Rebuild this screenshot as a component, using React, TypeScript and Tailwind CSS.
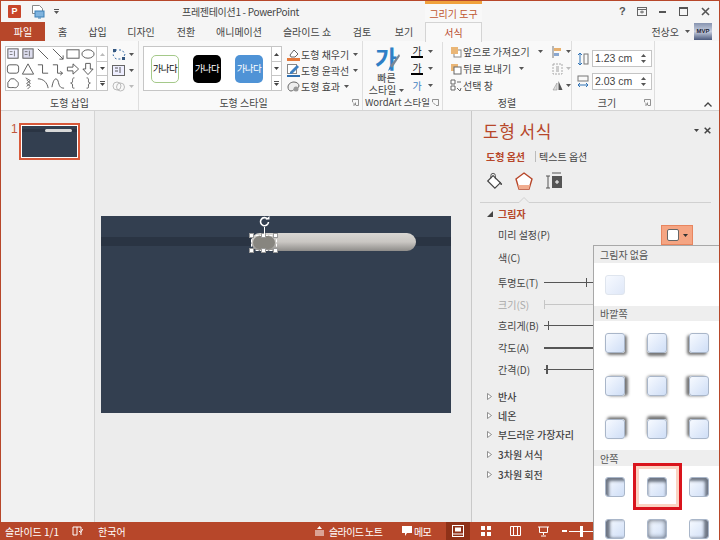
import React from "react";

const Caret = ({ c = "#555", cls = "" }: { c?: string; cls?: string }) => (
  <svg width="5" height="3" viewBox="0 0 5 3" className={cls}><path d="M0 0h5L2.5 3z" fill={c} /></svg>
);

const tabs: [string, string][] = [
  ["홈", "w-[35px]"], ["삽입", "w-[35px]"], ["디자인", "w-[52px]"], ["전환", "w-[38px]"],
  ["애니메이션", "w-[68px]"], ["슬라이드 쇼", "w-[68px]"], ["검토", "w-[42px]"], ["보기", "w-[42px]"],
];

const S = "#555";
const shapeIcons: React.ReactNode[] = [
  <><rect x="2" y="2" width="11" height="10" fill="#eef" stroke={S} /><path d="M4 5h3M4 8h3M9 4v6" stroke={S} strokeWidth=".8" /></>,
  <><rect x="2" y="2" width="11" height="10" fill="#dde" stroke={S} /><path d="M4 5h3M4 8h3M9 4v6" stroke={S} strokeWidth=".8" /></>,
  <path d="M2 2l11 11" stroke={S} fill="none" />,
  <path d="M2 2l11 11M13 13V9M13 13H9" stroke={S} fill="none" />,
  <rect x="1" y="3" width="13" height="9" fill="none" stroke={S} />,
  <ellipse cx="7.5" cy="7.5" rx="6.5" ry="4.5" fill="none" stroke={S} />,
  <rect x="1.5" y="3" width="12" height="9" rx="2.5" fill="none" stroke={S} />,
  <path d="M7.5 2L13.5 13H1.5z" fill="none" stroke={S} />,
  <path d="M2 3h5v9h6" fill="none" stroke={S} />,
  <path d="M2 3h5v9h5M10 10l2.5 2-2.5 2" fill="none" stroke={S} />,
  <path d="M1.5 5.5h6V2l6 5.5-6 5.5V9.5h-6z" fill="none" stroke={S} />,
  <path d="M5 1.5v6H2l5.5 6 5.5-6h-3v-6z" fill="none" stroke={S} />,
  <path d="M2 12V7l3-4h4l4 4c1 3-1 6-4 5.5-2-.5-3 .5-7-.5z" fill="none" stroke={S} />,
  <path d="M5 2l5 3-4 3 4 3-3 3M6 4l4 4-4 3" fill="none" stroke={S} strokeWidth=".9" />,
  <path d="M2 3c6 0 10 4 11 10" fill="none" stroke={S} />,
  <path d="M1 12c2-12 6-10 7-5s3 6 6 6" fill="none" stroke={S} />,
  <path d="M9 2C7 2 7 3 7 5S7 7 5 7.5C7 8 7 9 7 11s0 2 2 2" fill="none" stroke={S} />,
  <path d="M6 2c2 0 2 1 2 3s0 2 2 2.5C8 8 8 9 8 11s0 2-2 2" fill="none" stroke={S} />,
];

const Scroll = ({ h = "h-[15px]", up = false, more = false, dim = false }: { h?: string; up?: boolean; more?: boolean; dim?: boolean }) => (
  <div className={`${h} flex flex-col items-center justify-center border-b border-[#c6c6c6] last:border-b-0`}>
    {more && <div className="w-[5px] h-px bg-[#555] mb-px" />}
    <svg width="5" height="3" viewBox="0 0 5 3" className={up ? "rotate-180" : ""}><path d="M0 0h5L2.5 3z" fill={dim ? "#bbb" : "#444"} /></svg>
  </div>
);

const GroupLabel = ({ text, launcher = false, cls = "" }: { text: string; launcher?: boolean; cls?: string }) => (
  <div className={`h-[16px] flex items-center justify-center relative text-[10px] text-[#444] ${cls}`}>
    {text}
    {launcher && (
      <svg width="7" height="7" viewBox="0 0 7 7" className="absolute right-[3px] top-[5px]"><path d="M.5 3V.5H6.5V6.5H4M1 3.5l2.5 2.5M3.5 3.5V6H1" fill="none" stroke="#777" strokeWidth=".8" /></svg>
    )}
  </div>
);

const MenuRow = ({ icon, text, caret = true, gap = "ml-[7px]" }: { icon: React.ReactNode; text: string; caret?: boolean; gap?: string }) => (
  <div className="h-[17.5px] flex items-center text-[10px] text-[#444]">
    <div className="w-[13px] flex justify-center">{icon}</div>
    <span className="ml-[1px] whitespace-nowrap">{text}</span>
    {caret && <Caret cls={gap} />}
  </div>
);

const Chip = ({ cls, text }: { cls: string; text: string }) => (
  <div className={`w-[28px] h-[28px] rounded-[5px] flex items-center justify-center text-[9.5px] tracking-[-0.5px] whitespace-nowrap ${cls}`}>{text}</div>
);

const Spin = ({ v }: { v: string }) => (
  <div className="w-[60px] h-[17px] bg-white border border-[#c4c4c4] flex items-center justify-between pl-[2px] pr-[5px] text-[10.5px] text-[#444] font-['Liberation_Sans',sans-serif]">
    {v}
    <div className="flex flex-col gap-[3px]">
      <Caret cls="rotate-180" />
      <Caret />
    </div>
  </div>
);

const Slider = ({ tick, light = false, thick = false, dual = false }: { tick?: number; light?: boolean; thick?: boolean; dual?: boolean }) => {
  const line = light ? "bg-[#c6c6c6]" : "bg-[#555]";
  const ticks: Record<number, string> = { 0: "left-0", 2: "left-[2px]", 4: "left-[4px]", 42: "left-[42px]" };
  return (
    <div className="relative w-[50px] h-[9px]">
      <div className={`absolute left-0 right-0 top-[4px] ${thick ? "h-[2px]" : "h-px"} ${line}`} />
      {tick !== undefined && <div className={`absolute top-0 w-px h-[9px] ${line} ${ticks[tick]}`} />}
      {dual && <div className={`absolute top-0 left-[3px] w-px h-[9px] ${line}`} />}
    </div>
  );
};

const PaneRow = ({ label, h, dim = false, children }: { label: string; h: string; dim?: boolean; children?: React.ReactNode }) => (
  <div className={`${h} flex items-center pl-[26px] text-[10px] ${dim ? "text-[#aaa]" : "text-[#444]"}`}>
    <div className="w-[46px] whitespace-nowrap">{label}</div>
    {children}
  </div>
);

const Collapsed = ({ label, h }: { label: string; h: string }) => (
  <div className={`${h} flex items-center text-[10px] font-medium text-[#444]`}>
    <svg width="5" height="7" viewBox="0 0 5 7" className="ml-[15px] mr-[6px]"><path d="M.5.5L4.5 3.5.5 6.5z" fill="#fff" stroke="#777" strokeWidth=".8" /></svg>
    {label}
  </div>
);

const swatch = "w-[20px] h-[20px] rounded-[3px] bg-gradient-to-br from-[#f7faff] to-[#cfdef6] border border-[#a9b6c9]";
const outer = [
  "shadow-[2px_2px_3px_#777]", "shadow-[0_3px_3px_#777]", "shadow-[-2px_2px_3px_#777]",
  "shadow-[3px_0_3px_#777]", "shadow-[0_0_3px_#777]", "shadow-[-3px_0_3px_#777]",
  "shadow-[2px_-2px_3px_#777]", "shadow-[0_-3px_3px_#777]", "shadow-[-2px_-2px_3px_#777]",
];
const inner = [
  "shadow-[inset_3px_3px_3px_#6f7785]", "shadow-[inset_0_4px_3px_#6f7785]", "shadow-[inset_-3px_3px_3px_#6f7785]",
  "shadow-[inset_4px_0_3px_#6f7785]", "shadow-[inset_0_0_5px_#555d6b]", "shadow-[inset_-4px_0_3px_#6f7785]",
];

const MenuHead = ({ text, h }: { text: string; h: string }) => (
  <div className={`${h} bg-[#eeeeee] flex items-center pl-[6px] text-[10px] text-[#555]`}>{text}</div>
);

export default function App() {
  return (
    <div className="w-[720px] h-[540px] overflow-hidden flex flex-col bg-[#f5f5f5] font-['Noto_Sans_CJK_KR','Noto_Sans',sans-serif] border-x border-t border-[#b7472a] relative">
      {/* title bar */}
      <div className="h-[21px] flex items-center text-[#444] shrink-0">
        <div className="w-[424px] flex items-center pl-[7px]">
          <div className="w-[13px] h-[13px] bg-[#c8452a] text-white text-[9px] font-bold flex items-center justify-center font-['Liberation_Sans',sans-serif] rounded-[1px]">P</div>
          <svg width="14" height="15" viewBox="0 0 14 15" className="ml-[10px]">
            <path d="M1.5 1.5h7l3 3v5h-10z" fill="#fff" stroke="#888" />
            <rect x="4" y="7" width="9" height="6" fill="#7fb3de" stroke="#3b7fb5" />
            <path d="M7 14h3" stroke="#3b7fb5" />
          </svg>
          <div className="ml-[9px] flex flex-col items-center gap-px"><div className="w-[5px] h-px bg-[#555]" /><Caret /></div>
          <div className="ml-[123px] text-[10px] tracking-[-0.3px] whitespace-nowrap">프레젠테이션1 - PowerPoint</div>
        </div>
        <div className="w-[57px] h-full flex flex-col">
          <div className="h-[3px] bg-[#f0a13c]" />
          <div className="flex-1 flex items-center justify-center text-[10px] text-[#c0562f] bg-[#f8f8f8] whitespace-nowrap">그리기 도구</div>
        </div>
        <div className="flex-1 relative h-full flex items-center text-[#555]">
          <span className="ml-[137px] text-[11px] font-bold font-['Liberation_Sans',sans-serif]">?</span>
          <svg width="10" height="9" viewBox="0 0 10 9" className="ml-[11px]"><rect x=".5" y=".5" width="9" height="8" fill="none" stroke="#666" /><path d="M.5 2.5h9M3 5h4M5 3.5v3" stroke="#666" /></svg>
          <div className="ml-[12px] w-[7px] h-[2px] bg-[#555]" />
          <div className="ml-[13px] w-[9px] h-[9px] border border-[#555] border-t-2" />
          <svg width="9" height="9" viewBox="0 0 9 9" className="ml-[13px]"><path d="M1 1l7 7M8 1L1 8" stroke="#555" strokeWidth="1.6" /></svg>
        </div>
      </div>

      {/* tabs */}
      <div className="h-[19px] flex items-stretch shrink-0 text-[10px] text-[#444] relative z-10">
        <div className="w-[44px] bg-[#b7472a] text-white flex items-center justify-center">파일</div>
        {tabs.map(([t, w]) => (
          <div key={t} className={`${w} flex items-center justify-center whitespace-nowrap`}>{t}</div>
        ))}
        <div className="w-[57px] h-[20px] bg-[#f9f9f9] border-x border-t border-[#d4d4d4] text-[#b7472a] flex items-center justify-center">서식</div>
        <div className="flex-1 flex items-center justify-end pr-[7px]">
          <span className="text-[10px] mr-[6px]">전상오</span>
          <Caret cls="mr-[4px]" />
          <div className="w-[18px] h-[17px] bg-gradient-to-b from-[#8794b0] via-[#c8d0e0] to-[#4d5b7e] text-[#223] text-[6px] font-bold flex items-center justify-center font-['Liberation_Sans',sans-serif]">MVP</div>
        </div>
      </div>

      {/* ribbon */}
      <div className="h-[70px] flex bg-[#f9f9f9] border-b border-[#d4d4d4] shrink-0">
        {/* shapes */}
        <div className="w-[138px] flex flex-col border-r border-[#dedede]">
          <div className="h-[53px] flex pl-[4px] pt-[5px]">
            <div className="w-[103px] h-[45px] flex bg-white border border-[#c6c6c6]">
              <div className="w-[91px] grid grid-cols-6 content-start -ml-[1px]">
                {shapeIcons.map((ic, i) => (
                  <div key={i} className="h-[14.5px] flex items-center justify-center">
                    <svg width="14" height="14" viewBox="0 0 15 15">{ic}</svg>
                  </div>
                ))}
              </div>
              <div className="flex-1 border-l border-[#c6c6c6] flex flex-col">
                <Scroll up dim h="h-[15px]" />
                <Scroll h="h-[14px]" />
                <Scroll more h="h-[14px]" />
              </div>
            </div>
            <div className="ml-[4px] flex flex-col items-start">
              <div className="h-[16px] flex items-center">
                <svg width="14" height="13" viewBox="0 0 14 13"><path d="M3 2h7l3 4-2 5H4L1 7z" fill="none" stroke="#3b6fa8" strokeDasharray="2 2" /><rect x="1" y="1" width="3" height="3" fill="#35577f" /><rect x="10" y="9" width="3" height="3" fill="#35577f" /></svg>
                <Caret cls="ml-[3px]" />
              </div>
              <div className="h-[17px] flex items-center">
                <svg width="14" height="13" viewBox="0 0 14 13"><rect x=".5" y="1.5" width="12" height="10" fill="#eef" stroke="#666" /><path d="M3 4h3M3 7h3M8 3v6" stroke="#555" /></svg>
                <Caret cls="ml-[3px]" />
              </div>
              <div className="h-[15px] flex items-center">
                <svg width="14" height="13" viewBox="0 0 14 13"><circle cx="5" cy="6" r="4" fill="none" stroke="#bbb" /><circle cx="8.5" cy="7" r="4" fill="none" stroke="#bbb" /></svg>
                <Caret c="#bbb" cls="ml-[3px]" />
              </div>
            </div>
          </div>
          <GroupLabel text="도형 삽입" />
        </div>
        {/* styles */}
        <div className="w-[224px] flex flex-col border-r border-[#dedede]">
          <div className="h-[53px] flex pl-[4px] pt-[5px]">
            <div className="w-[139px] h-[45px] flex bg-white border border-[#c6c6c6]">
              <div className="w-[127px] flex items-center pl-[7px] gap-[14px]">
                <Chip cls="bg-white border border-[#a5c98a] text-[#111]" text="가나다" />
                <Chip cls="bg-black text-white" text="가나다" />
                <Chip cls="bg-[#4f93d6] text-white" text="가나다" />
              </div>
              <div className="flex-1 border-l border-[#c6c6c6] flex flex-col">
                <Scroll up h="h-[15px]" />
                <Scroll h="h-[14px]" />
                <Scroll more h="h-[14px]" />
              </div>
            </div>
            <div className="ml-[5px] flex flex-col">
              <MenuRow text="도형 채우기" gap="ml-[4px]" icon={<svg width="13" height="13" viewBox="0 0 13 13"><path d="M3 7l4-5 4 4-3 3H4z" fill="#fff" stroke="#666" /><rect x="0" y="10" width="13" height="3" fill="#e5793b" /></svg>} />
              <MenuRow text="도형 윤곽선" gap="ml-[4px]" icon={<svg width="13" height="13" viewBox="0 0 13 13"><rect x=".5" y=".5" width="9" height="9" fill="#fff" stroke="#888" /><path d="M3 8l7-7 2 2-7 7H3z" fill="#3d7fc0" /><rect x="0" y="11" width="13" height="2" fill="#2f6fb0" /></svg>} />
              <MenuRow text="도형 효과" gap="ml-[4px]" icon={<svg width="13" height="13" viewBox="0 0 13 13"><path d="M1 7c0-3 3-5 6-5s5 2 5 4-3 3-4 3-2 2-4 2-3-2-3-4z" fill="#eee" stroke="#666" /><circle cx="9" cy="9" r="2.5" fill="#999" /></svg>} />
            </div>
          </div>
          <GroupLabel text="도형 스타일" launcher cls="pr-[14px]" />
        </div>
        {/* wordart */}
        <div className="w-[80px] flex flex-col border-r border-[#dedede]">
          <div className="h-[53px] flex">
            <div className="w-[47px] flex flex-col items-center text-[10px] text-[#444] leading-[12px]">
              <svg width="28" height="25" viewBox="0 0 28 25" className="mt-[6px] shrink-0 overflow-visible">
                <text x="2" y="21" fontSize="24" fontWeight="700" fill="#2f7fc6">가</text>
                <path d="M26 7L17 19l2 2 8-12z" fill="#7a8796" />
                <path d="M17 19l-2 5 4-3z" fill="#2f7fc6" />
              </svg>
              <div>빠른</div>
              <div className="flex items-center whitespace-nowrap">스타일<Caret cls="ml-[3px]" /></div>
            </div>
            <div className="flex flex-col pt-[2px] ml-[1px]">
              {["가", "가", "가"].map((g, i) => (
                <div key={i} className="h-[17.5px] flex items-center">
                  <div className={`w-[12px] text-center text-[10px] leading-[11px] ${i === 2 ? "text-[#3f7fc0]" : "text-[#222] border-b-2 border-black"}`}>{g}</div>
                  <Caret cls="ml-[5px]" />
                </div>
              ))}
            </div>
          </div>
          <div className="h-[16px] flex items-center pl-[2px] text-[9.5px] text-[#444] whitespace-nowrap relative">WordArt 스타일
            <svg width="7" height="7" viewBox="0 0 7 7" className="absolute right-[3px] top-[5px]"><path d="M.5 3V.5H6.5V6.5H4M1 3.5l2.5 2.5" fill="none" stroke="#777" strokeWidth=".8" /></svg>
          </div>
        </div>
        {/* arrange */}
        <div className="w-[129px] flex flex-col border-r border-[#dedede]">
          <div className="h-[53px] flex pl-[6px] pt-[2px]">
            <div className="w-[103px] flex flex-col">
              <MenuRow text="앞으로 가져오기" gap="ml-[8px]" icon={<svg width="12" height="12" viewBox="0 0 12 12"><rect x="4" y="4" width="7" height="7" fill="#fff" stroke="#888" /><rect x="1" y="1" width="7" height="7" fill="#eab676" /></svg>} />
              <MenuRow text="뒤로 보내기" gap="ml-[8px]" icon={<svg width="12" height="12" viewBox="0 0 12 12"><rect x="1" y="1" width="7" height="7" fill="#eab676" /><rect x="4" y="4" width="7" height="7" fill="#fff" stroke="#666" /></svg>} />
              <MenuRow text="선택 창" caret={false} icon={<svg width="12" height="13" viewBox="0 0 12 13"><path d="M1 1h4v4H1zM1 7h4v4H1z" fill="#fff" stroke="#666" /><path d="M7 3h4M7 9l3 3 1-3" stroke="#666" fill="none" /></svg>} />
            </div>
            <div className="flex flex-col">
              <div className="h-[17.5px] flex items-center">
                <svg width="11" height="12" viewBox="0 0 11 12"><path d="M1 0v12" stroke="#777" /><rect x="2" y="2" width="7" height="3" fill="#e6b06f" /><rect x="2" y="7" width="5" height="3" fill="#8aa7d0" /></svg>
                <Caret cls="ml-[3px]" />
              </div>
              <div className="h-[17.5px] flex items-center">
                <svg width="11" height="12" viewBox="0 0 11 12"><path d="M1 1h9v10H1z" fill="none" stroke="#aaa" strokeDasharray="2 1" /><path d="M4 3h3v6H4z" fill="#ccc" /></svg>
                <Caret c="#bbb" cls="ml-[3px]" />
              </div>
              <div className="h-[17.5px] flex items-center">
                <svg width="11" height="12" viewBox="0 0 11 12"><path d="M5 3L1 10h4z" fill="#ddd" stroke="#999" strokeWidth=".6" /><path d="M6.5 1L10.5 10h-4z" fill="#555" /></svg>
                <Caret cls="ml-[3px]" />
              </div>
            </div>
          </div>
          <GroupLabel text="정렬" />
        </div>
        {/* size */}
        <div className="w-[83px] flex flex-col border-r border-[#dedede]">
          <div className="h-[53px] flex flex-col pl-[5px] pt-[9px] gap-[6px]">
            <div className="flex items-center gap-[3px]">
              <svg width="12" height="14" viewBox="0 0 12 14" className="shrink-0"><path d="M3 1v12M1 3l2-2 2 2M1 11l2 2 2-2" fill="none" stroke="#2f72b5" /><rect x="7" y="2" width="4" height="10" fill="none" stroke="#777" /></svg>
              <Spin v="1.23 cm" />
            </div>
            <div className="flex items-center gap-[3px]">
              <svg width="12" height="14" viewBox="0 0 12 14" className="shrink-0"><rect x="1" y="1" width="10" height="5" fill="none" stroke="#777" /><path d="M1 10h10M3 8l-2 2 2 2M9 8l2 2-2 2" fill="none" stroke="#2f72b5" /></svg>
              <Spin v="2.03 cm" />
            </div>
          </div>
          <GroupLabel text="크기" launcher cls="pr-[12px]" />
        </div>
        <div className="flex-1 flex items-end justify-end pb-[3px] pr-[7px]">
          <svg width="8" height="5" viewBox="0 0 8 5"><path d="M.5 4.5L4 1l3.5 3.5" fill="none" stroke="#444" strokeWidth="1.3" /></svg>
        </div>
      </div>

      {/* main */}
      <div className="flex-1 min-h-0 flex">
        {/* thumbs */}
        <div className="w-[94px] bg-[#f1f1f1] border-r border-[#d4d4d4] flex pt-[12px] pl-[10px] shrink-0">
          <span className="text-[12px] leading-[14px] text-[#c0563a] mt-[-1px] font-['Liberation_Sans',sans-serif]">1</span>
          <div className="ml-[1px] w-[61px] h-[37px] border-2 border-[#d8593a] p-px bg-white">
            <div className="w-full h-full bg-[#333f50] flex flex-col pt-[3px]">
              <div className="h-[3px] bg-[#2a3443] flex items-center justify-end pr-[5px]"><div className="w-[27px] h-[3px] bg-[#d8d8d8] rounded-full" /></div>
            </div>
          </div>
        </div>
        {/* canvas */}
        <div className="w-[377px] bg-[#ececec] border-r border-[#c9c9c9] flex flex-col items-start shrink-0 pt-[105px] pl-[6px]">
          <div className="w-[350px] h-[197px] bg-[#333f50] flex flex-col pt-[21px]">
            <div className="h-[9px] bg-[#2a3443] flex items-center pl-[150px]">
              <div className="relative w-[165px] h-[18px] rounded-full bg-gradient-to-b from-[#d9d7d3] via-[#c9c6c2] to-[#8f8d8a] shrink-0">
                <div className="absolute left-[2px] top-[3px] w-[22px] h-[13px] rounded-full bg-[#87857f]" />
                <div className="absolute left-0 top-[2px] w-[26px] h-[16px] border border-dashed border-white" />
                {["left-[-2px] top-0", "left-[10px] top-0", "left-[22px] top-0", "left-[-2px] top-[15px]", "left-[10px] top-[15px]", "left-[22px] top-[15px]"].map((p) => (
                  <div key={p} className={`absolute ${p} w-[5px] h-[5px] bg-white border border-[#999]`} />
                ))}
                <div className="absolute left-[13px] top-[-6px] w-px h-[7px] bg-white" />
                <svg width="11" height="11" viewBox="0 0 11 11" className="absolute left-[8px] top-[-17px]"><path d="M8.5 3A4 4 0 1 0 9.5 6" fill="none" stroke="#fff" strokeWidth="1.6" /><path d="M6.5 3.5h4V0z" fill="#fff" /></svg>
              </div>
            </div>
          </div>
        </div>
        {/* pane */}
        <div className="flex-1 relative bg-[#eeeeee]">
          <div className="h-[34px] flex items-end justify-between pl-[11px] pr-[8px]">
            <span className="text-[17px] leading-[26px] text-[#b7472a] tracking-[0.5px] -translate-y-px">도형 서식</span>
            <div className="flex items-center gap-[5px] pb-[11px]">
              <Caret c="#444" />
              <svg width="7" height="7" viewBox="0 0 7 7"><path d="M.7.7l5.6 5.6M6.3.7L.7 6.3" stroke="#444" strokeWidth="1.5" /></svg>
            </div>
          </div>
          <div className="h-[24px] flex items-center pl-[14px] text-[10px] -translate-y-px">
            <span className="text-[#b7472a] font-bold">도형 옵션</span>
            <div className="w-px h-[11px] bg-[#bbb] ml-[10px] mr-[3px]" />
            <span className="text-[#444]">텍스트 옵션</span>
          </div>
          <div className="relative h-[34px] flex items-start pl-[5px] pt-[2px] gap-[11px] mx-[8px] border-b border-[#d0d0d0]">
            <svg width="18" height="20" viewBox="0 0 20 20"><path d="M9 4l8 8-6 6-8-8z" fill="#fff" stroke="#444" strokeWidth="1.3" /><path d="M6.5 7V4a2.5 2.5 0 0 1 5 0v4" fill="none" stroke="#444" /><path d="M16 10l3 3c0 2-2 2-2 0z" fill="#444" /></svg>
            <svg width="20" height="20" viewBox="0 0 20 20"><path d="M10 2l8 6-3 10H5L2 8z" fill="#fff" stroke="#b7472a" strokeWidth="1.4" /><path d="M4 14h12l-1 4H5z" fill="#f1ad90" /></svg>
            <svg width="18" height="20" viewBox="0 0 18 20"><path d="M3 5v12M1 5h4M1 17h4M7 2h9" stroke="#555" fill="none" /><rect x="7" y="5" width="10" height="12" fill="#555" /><path d="M10 11h4M12 9v4" stroke="#fff" /></svg>
            <svg width="12" height="6" viewBox="0 0 12 6" className="absolute left-[38px] bottom-[-1px]"><path d="M0 5.5h1L6 .5l5 5h1v.5H0z" fill="#eeeeee" /><path d="M0 5.5h1L6 .5l5 5h1" fill="none" stroke="#d0d0d0" /></svg>
          </div>
          <div className="h-[21px] flex items-center text-[10px] font-bold text-[#b7472a]">
            <svg width="6" height="6" viewBox="0 0 6 6" className="ml-[15px] mr-[5px]"><path d="M6 0v6H0z" fill="#444" /></svg>
            그림자
          </div>
          <PaneRow label="미리 설정(P)" h="h-[20px]" />
          <PaneRow label="색(C)" h="h-[26px]" />
          <PaneRow label="투명도(T)" h="h-[24px]"><Slider tick={42} /></PaneRow>
          <PaneRow label="크기(S)" h="h-[20px]" dim><Slider tick={0} light /></PaneRow>
          <PaneRow label="흐리게(B)" h="h-[22px]"><Slider tick={4} /></PaneRow>
          <PaneRow label="각도(A)" h="h-[22px]"><Slider thick /></PaneRow>
          <PaneRow label="간격(D)" h="h-[22px]"><Slider tick={2} dual /></PaneRow>
          <div className="h-[6px]" />
          <Collapsed label="반사" h="h-[20px]" />
          <Collapsed label="네온" h="h-[19px]" />
          <Collapsed label="부드러운 가장자리" h="h-[19px]" />
          <Collapsed label="3차원 서식" h="h-[20px]" />
          <Collapsed label="3차원 회전" h="h-[20px]" />

          {/* preset button */}
          <div className="absolute left-[189px] top-[114px] w-[32px] h-[20px] bg-[#f5a583] border border-[#e8855f] flex items-center justify-center gap-[4px]">
            <div className="w-[12px] h-[12px] bg-white border border-[#666] rounded-[2px]" />
            <Caret c="#333" />
          </div>
        </div>
      </div>

      {/* status bar */}
      <div className="h-[18px] bg-[#b7472a] flex items-center text-white text-[10px] shrink-0">
        <span className="ml-[4px] w-[60px] whitespace-nowrap">슬라이드 1/1</span>
        <svg width="11" height="10" viewBox="0 0 11 10" className="ml-[7px]"><path d="M1 1h4v8H1zM5 1h4v8" fill="none" stroke="#fff" /><path d="M7 5l1.5 1.5L11 3" fill="none" stroke="#fff" /></svg>
        <span className="ml-[15px] w-[30px]">한국어</span>
        <svg width="9" height="10" viewBox="0 0 9 10" className="ml-[187px]"><path d="M4.5 0L7 3H2z" fill="#fff" /><path d="M0 5h9M0 7h9M0 9h9" stroke="#fff" /></svg>
        <span className="ml-[5px] w-[57px] whitespace-nowrap tracking-[-0.6px]">슬라이드 노트</span>
        <svg width="10" height="10" viewBox="0 0 10 10" className="ml-[16px]"><path d="M0 0h10v7H5l-2 3V7H0z" fill="#fff" /></svg>
        <span className="ml-[2px] w-[17px] whitespace-nowrap tracking-[-0.8px]">메모</span>
        <div className="ml-[15px] w-[24px] h-full bg-[#8f3118] flex items-center justify-center">
          <svg width="12" height="12" viewBox="0 0 12 12"><rect x=".5" y=".5" width="11" height="11" fill="none" stroke="#fff" /><rect x="3" y="2.5" width="6" height="4" fill="#fff" /><path d="M1 9h10" stroke="#fff" /></svg>
        </div>
        <div className="ml-[11px] grid grid-cols-2 gap-[2px]">
          {[0, 1, 2, 3].map((i) => <div key={i} className="w-[4px] h-[4px] bg-white" />)}
        </div>
        <svg width="11" height="10" viewBox="0 0 11 10" className="ml-[19px]"><path d="M.5.5h10v9H.5zM3.5.5v9M7.5.5v9" fill="none" stroke="#fff" /></svg>
        <svg width="11" height="11" viewBox="0 0 11 11" className="ml-[17px]"><path d="M0 1h11M1.5 1v5.5h8V1M5.5 6.5V9M3 10h5" fill="none" stroke="#fff" /></svg>
        <div className="ml-[13px] w-[5px] h-[2px] bg-white" />
        <div className="ml-[2px] relative w-[30px] h-px bg-white">
          <div className="absolute left-[11px] top-[-5px] w-[3px] h-[11px] bg-white" />
        </div>
      </div>

      {/* dropdown gallery */}
      <div className="absolute left-[592px] top-[244px] w-[128px] h-[296px] bg-white border-l border-t border-[#a8a8a8] flex flex-col">
        <MenuHead text="그림자 없음" h="h-[17px] shrink-0" />
        <div className="h-[43px] shrink-0 flex items-center pl-[11px]">
          <div className="w-[20px] h-[20px] rounded-[3px] bg-gradient-to-br from-[#f7faff] to-[#dfe8f8] border border-[#dfe5ee]" />
        </div>
        <MenuHead text="바깥쪽" h="h-[15px] shrink-0" />
        <div className="grid grid-cols-3 w-[126px] shrink-0">
          {outer.map((o) => (
            <div key={o} className="h-[43px] flex items-center justify-center"><div className={`${swatch} ${o}`} /></div>
          ))}
        </div>
        <MenuHead text="안쪽" h="h-[16px] shrink-0" />
        <div className="grid grid-cols-3 w-[126px] shrink-0">
          {inner.map((o, i) => (
            <div key={o} className="h-[42px] flex items-center justify-center relative">
              <div className={`${swatch} ${o}`} />
              {i === 1 && (
                <div className="absolute left-[-3px] top-[-3px] w-[49px] h-[47px] border-[3px] border-[#d9141c]">
                  <div className="w-full h-full border-[3px] border-[#fbd3c3]" />
                </div>
              )}
            </div>
          ))}
        </div>
      </div>
    </div>
  );
}
